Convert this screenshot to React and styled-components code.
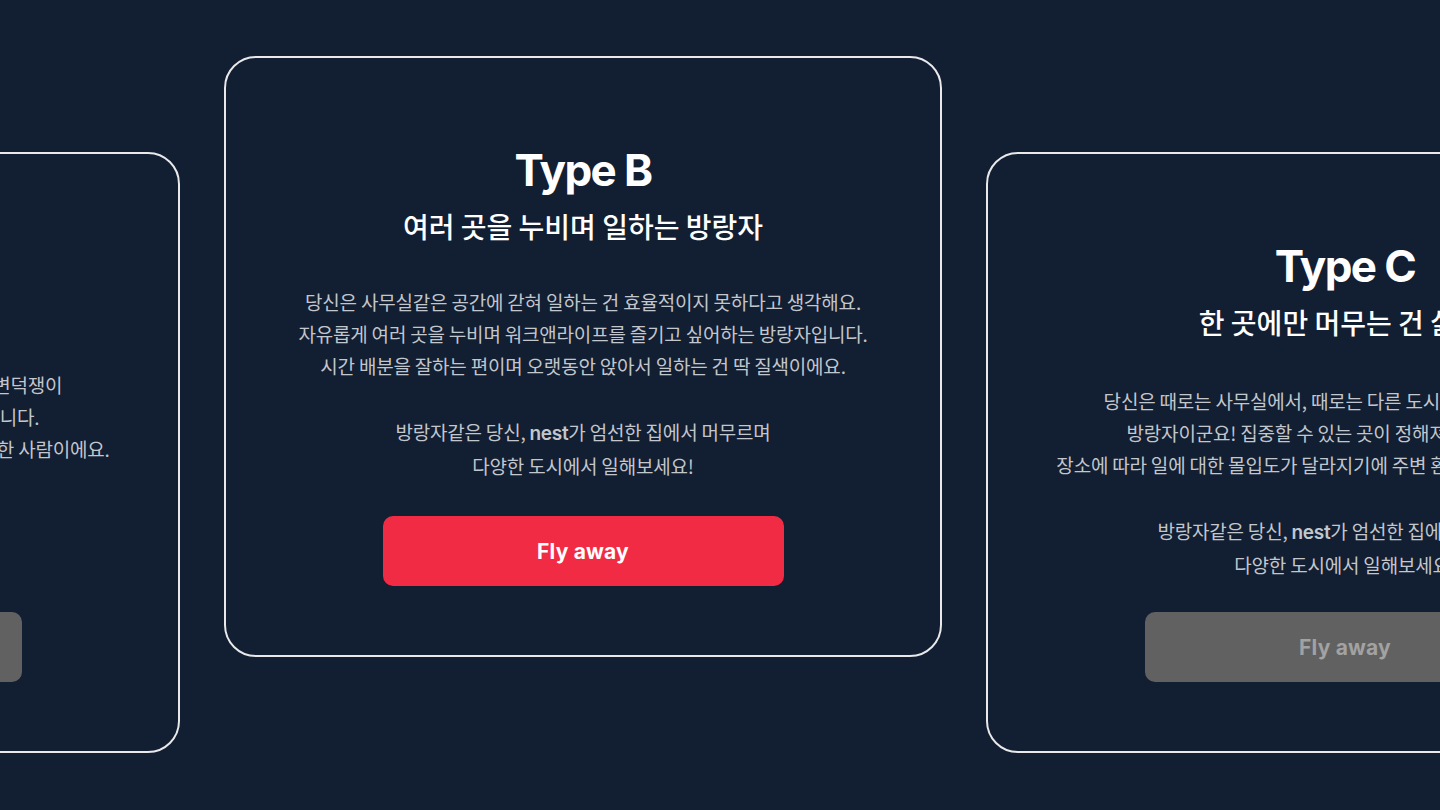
import styled, {createGlobalStyle} from 'styled-components';

const GlobalStyle = createGlobalStyle`
  html, body {
    margin: 0;
    padding: 0;
    background: #121e31;
  }
  * { box-sizing: border-box; }
`

let Stage = styled.div`
  width: 1440px;
  height: 810px;
  overflow: hidden;
  background: #121e31;
`

let Track = styled.div`
  display: flex;
  align-items: flex-start;
  gap: 44px;
  margin-left: -538px;
  padding-top: 56px;
`

let Card = styled.div`
  flex: 0 0 718px;
  width: 718px;
  height: 601px;
  margin-top: ${props => props.$side ? '96px' : '0'};
  border: 2px solid #e9e9ec;
  border-radius: 32px;
  padding: 86px 0 69px;
  display: flex;
  flex-direction: column;
  align-items: center;
  text-align: center;
`

let Title = styled.h2`
  margin: 0;
  font-family: Inter, "Liberation Sans", sans-serif;
  font-size: 44px;
  font-weight: 700;
  line-height: 1.2;
  letter-spacing: -1.6px;
  color: #ffffff;
`

let Subtitle = styled.h3`
  margin: 11px 0 0;
  font-family: "Noto Sans CJK KR", "Noto Sans", sans-serif;
  font-size: 28px;
  font-weight: 500;
  line-height: 1.3;
  letter-spacing: 0;
  color: #ffffff;
`

// 설명 영역은 제목과 버튼 사이 가운데 정렬
let Body = styled.div`
  flex: 1;
  display: flex;
  flex-direction: column;
  justify-content: center;
  gap: 34px;
  padding-top: ${props => props.$side ? '14px' : '8px'};
  white-space: nowrap;
`

let Para = styled.p`
  margin: 0;
  font-family: "Noto Sans CJK KR", "Noto Sans", sans-serif;
  font-size: 19px;
  font-weight: 400;
  line-height: 32px;
  letter-spacing: -0.2px;
  color: #c2c6cd;

  b {
    font-family: Inter, "Liberation Sans", sans-serif;
    font-weight: 600;
    letter-spacing: -0.3px;
  }
`

let FlyButton = styled.button`
  width: 401px;
  height: 70px;
  border: none;
  border-radius: 10px;
  background: ${props => props.$muted ? '#616161' : '#f22b45'};
  color: ${props => props.$muted ? '#a2a2a2' : '#ffffff'};
  font-family: Inter, "Liberation Sans", sans-serif;
  font-size: 21px;
  font-weight: 700;
  letter-spacing: 0.2px;
  cursor: pointer;
`

const typeC = {
  title: 'Type C',
  subtitle: '한 곳에만 머무는 건 싫어!',
  lines: [
    '당신은 때로는 사무실에서, 때로는 다른 도시에 머무는 변덕쟁이',
    '방랑자이군요! 집중할 수 있는 곳이 정해져 있지 않습니다.',
    '장소에 따라 일에 대한 몰입도가 달라지기에 주변 환경이 중요한 사람이에요.',
  ],
}

const types = [
  {
    ...typeC,
    key: 'A',
    extra: ['방랑자같은 당신,', <><b>nest</b>가 엄선한 집에서 머무르며</>, '다양한 도시에서 일해보세요!'],
    side: true,
  },
  {
    key: 'B',
    title: 'Type B',
    subtitle: '여러 곳을 누비며 일하는 방랑자',
    lines: [
      '당신은 사무실같은 공간에 갇혀 일하는 건 효율적이지 못하다고 생각해요.',
      '자유롭게 여러 곳을 누비며 워크앤라이프를 즐기고 싶어하는 방랑자입니다.',
      '시간 배분을 잘하는 편이며 오랫동안 앉아서 일하는 건 딱 질색이에요.',
    ],
    extra: [<>방랑자같은 당신, <b>nest</b>가 엄선한 집에서 머무르며</>, '다양한 도시에서 일해보세요!'],
    side: false,
  },
  {
    ...typeC,
    key: 'C',
    extra: [<>방랑자같은 당신, <b>nest</b>가 엄선한 집에서 머무르며</>, '다양한 도시에서 일해보세요!'],
    side: true,
  },
]

function TypeCard({item}) {
  return (
    <Card $side={item.side}>
      <Title>{item.title}</Title>
      <Subtitle>{item.subtitle}</Subtitle>
      <Body $side={item.side}>
        <Para>
          {item.lines.map((l, i) => <span key={i}>{l}<br/></span>)}
        </Para>
        <Para>
          {item.extra.map((l, i) => <span key={i}>{l}{i < item.extra.length - 1 && <br/>}</span>)}
        </Para>
      </Body>
      <FlyButton $muted={item.side}>Fly away</FlyButton>
    </Card>
  );
}

export default function App() {
  return (
    <Stage>
      <GlobalStyle />
      <Track>
        {types.map(t => <TypeCard key={t.key} item={t} />)}
      </Track>
    </Stage>
  );
}
